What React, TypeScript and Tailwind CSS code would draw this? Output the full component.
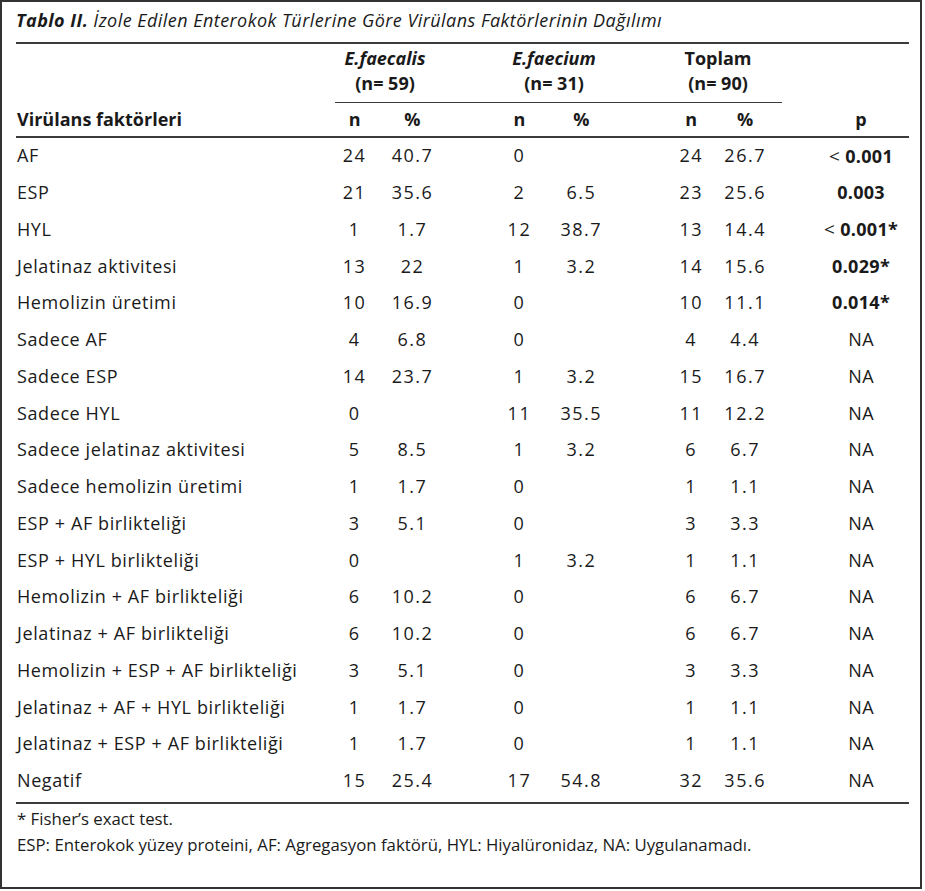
import type { ReactNode } from 'react';

type Row = { label: string; v: (string | null)[]; p: ReactNode };

const NA = 'NA';

const LT = <span className="text-[19px]">&lt;</span>;

const ROWS: Row[] = [
  { label: 'AF', v: ['24', '40.7', '0', null, '24', '26.7'], p: <>{LT} <b>0.001</b></> },
  { label: 'ESP', v: ['21', '35.6', '2', '6.5', '23', '25.6'], p: <b>0.003</b> },
  { label: 'HYL', v: ['1', '1.7', '12', '38.7', '13', '14.4'], p: <>{LT} <b>0.001*</b></> },
  { label: 'Jelatinaz aktivitesi', v: ['13', '22', '1', '3.2', '14', '15.6'], p: <b>0.029*</b> },
  { label: 'Hemolizin üretimi', v: ['10', '16.9', '0', null, '10', '11.1'], p: <b>0.014*</b> },
  { label: 'Sadece AF', v: ['4', '6.8', '0', null, '4', '4.4'], p: NA },
  { label: 'Sadece ESP', v: ['14', '23.7', '1', '3.2', '15', '16.7'], p: NA },
  { label: 'Sadece HYL', v: ['0', null, '11', '35.5', '11', '12.2'], p: NA },
  { label: 'Sadece jelatinaz aktivitesi', v: ['5', '8.5', '1', '3.2', '6', '6.7'], p: NA },
  { label: 'Sadece hemolizin üretimi', v: ['1', '1.7', '0', null, '1', '1.1'], p: NA },
  { label: 'ESP + AF birlikteliği', v: ['3', '5.1', '0', null, '3', '3.3'], p: NA },
  { label: 'ESP + HYL birlikteliği', v: ['0', null, '1', '3.2', '1', '1.1'], p: NA },
  { label: 'Hemolizin + AF birlikteliği', v: ['6', '10.2', '0', null, '6', '6.7'], p: NA },
  { label: 'Jelatinaz + AF birlikteliği', v: ['6', '10.2', '0', null, '6', '6.7'], p: NA },
  { label: 'Hemolizin + ESP + AF birlikteliği', v: ['3', '5.1', '0', null, '3', '3.3'], p: NA },
  { label: 'Jelatinaz + AF + HYL birlikteliği', v: ['1', '1.7', '0', null, '1', '1.1'], p: NA },
  { label: 'Jelatinaz + ESP + AF birlikteliği', v: ['1', '1.7', '0', null, '1', '1.1'], p: NA },
  { label: 'Negatif', v: ['15', '25.4', '17', '54.8', '32', '35.6'], p: NA },
];

// column widths/offsets so the centers land where the printed table has them
const COLS = [
  'w-[56px] text-center',
  'w-[60px] text-center',
  'ml-[49px] w-[56px] text-center',
  'w-[68px] text-center',
  'ml-[48px] w-[56px] text-center',
  'w-[52px] text-center',
];
const PCOL = 'ml-[42px] w-[96px] text-center';

function Rule() {
  return <div className="h-[1.5px] w-full bg-[#3c3c3c]" />;
}

export default function App() {
  return (
    <div className="min-h-screen bg-white font-['Open_Sans',sans-serif] text-[#1a1a1a]">
      <div className="h-[889px] w-[922px] border-2 border-[#333] pl-[14px]">
        <div className="w-[893px]">
          <div className="pt-[7px] pb-[11px] text-[18px] leading-[22px] tracking-[0.45px] italic">
            <b>Tablo II.</b> İzole Edilen Enterokok Türlerine Göre Virülans Faktörlerinin Dağılımı
          </div>
          <Rule />

          <div className="mt-[2px] flex text-[18px] font-bold leading-[25px]">
            <div className="w-[311px]" />
            <div className="w-[116px] text-center">
              <div className="italic">E.faecalis</div>
              <div>(n= 59)</div>
            </div>
            <div className="ml-[49px] w-[124px] text-center">
              <div className="italic">E.faecium</div>
              <div>(n= 31)</div>
            </div>
            <div className="ml-[48px] w-[108px] text-center">
              <div>Toplam</div>
              <div>(n= 90)</div>
            </div>
          </div>
          <div className="mt-[6px] ml-[319px] h-[1.5px] w-[447px] bg-[#3c3c3c]" />

          <div className="flex h-[33px] items-center text-[18px] font-bold">
            <div className="w-[311px] pl-[1px]">Virülans faktörleri</div>
            {['n', '%', 'n', '%', 'n', '%'].map((h, i) => (
              <div key={i} className={COLS[i]}>{h}</div>
            ))}
            <div className={PCOL}>p</div>
          </div>
          <Rule />

          <div className="pb-[3px]">
            {ROWS.map((r) => (
              <div key={r.label} className="flex h-[36.75px] items-center text-[18px]">
                <div className="w-[311px] pl-[1px] tracking-[0.6px]">{r.label}</div>
                {r.v.map((c, i) => (
                  <div key={i} className={`${COLS[i]} tracking-[1.5px]`}>{c ?? ''}</div>
                ))}
                <div className={`${PCOL} tracking-[0.3px]`}>{r.p}</div>
              </div>
            ))}
          </div>
          <Rule />

          <div className="mt-[2px] pl-[1px] text-[16.8px] leading-[26px]">
            <div>* Fisher’s exact test.</div>
            <div>ESP: Enterokok yüzey proteini, AF: Agregasyon faktörü, HYL: Hiyalüronidaz, NA: Uygulanamadı.</div>
          </div>
        </div>
      </div>
    </div>
  );
}
